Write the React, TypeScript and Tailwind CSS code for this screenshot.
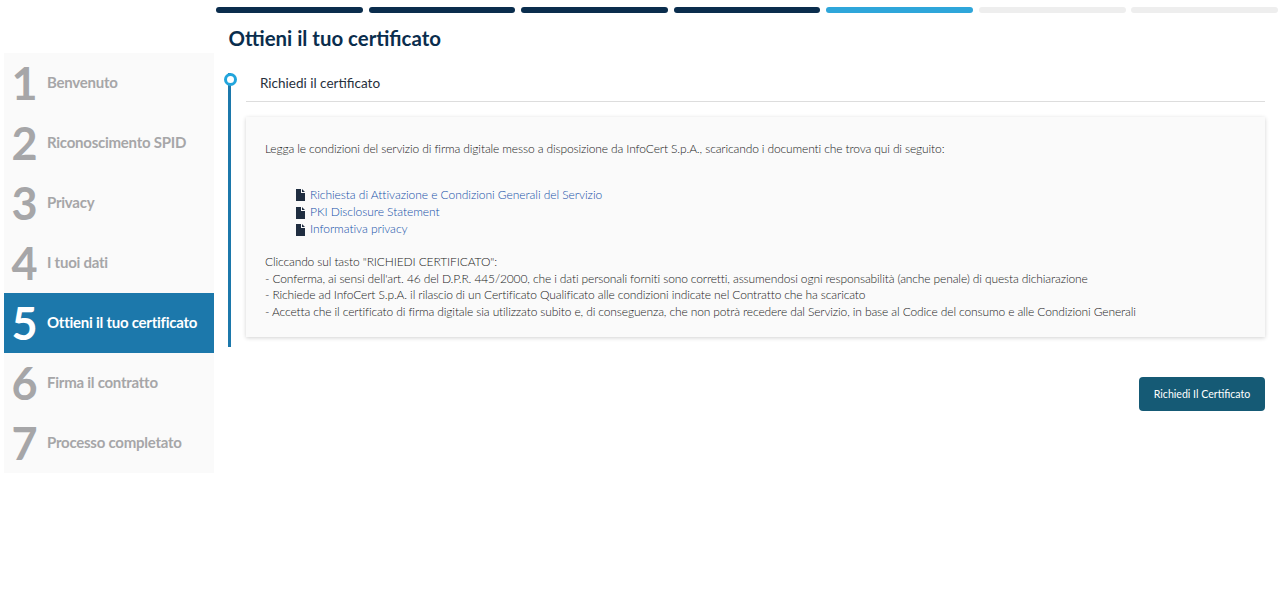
const steps = ["Benvenuto", "Riconoscimento SPID", "Privacy", "I tuoi dati", "Ottieni il tuo certificato", "Firma il contratto", "Processo completato"];
const bars = ["bg-[#0a2d4d]", "bg-[#0a2d4d]", "bg-[#0a2d4d]", "bg-[#0a2d4d]", "bg-[#2fa6da]", "bg-[#eeeeee]", "bg-[#eeeeee]"];
const docs = ["Richiesta di Attivazione e Condizioni Generali del Servizio", "PKI Disclosure Statement", "Informativa privacy"];

function DocIcon() {
  return (
    <svg width="9" height="12" viewBox="0 0 9 12" className="shrink-0">
      <path d="M0 0H5V4H9V12H0Z M6 0L9 3H6Z" fill="#1f2d40" />
    </svg>
  );
}

export default function App() {
  return (
    <div className="w-[1280px] h-[598px] bg-white overflow-hidden font-['Lato',sans-serif] flex items-start">
      <aside className="mt-[53px] ml-1 w-[209.5px] shrink-0 bg-[#fafafa]">
        {steps.map((s, i) => {
          const active = i === 4;
          return (
            <div key={s} className={`h-[60px] flex items-center ${active ? "bg-[#1c78ab] text-white" : "text-[#a6a6a8]"}`}>
              <span className="w-[43px] pr-[2px] text-center text-[45px] leading-none font-bold">{i + 1}</span>
              <span className="text-[15px] mb-[2px] font-bold tracking-[-0.25px] whitespace-nowrap">{s}</span>
            </div>
          );
        })}
      </aside>
      <main className="ml-[2.5px] flex-1 min-w-0">
        <div className="mt-[7px] flex gap-[5.6px] pr-0.5">
          {bars.map((b, i) => (
            <div key={i} className={`h-[6px] flex-1 rounded-full ${b}`} />
          ))}
        </div>
        <h1 className="mt-[13px] ml-[12.5px] text-[20.4px] leading-[24px] font-bold text-[#0a2d4d]">Ottieni il tuo certificato</h1>
        <div className="relative mt-[23px] ml-[12px] h-[274px] border-l-[3px] border-[#1c78ab] pl-[15px] pr-[15px]">
          <span className="absolute left-[-7.5px] top-0 w-[13px] h-[13px] rounded-full border-[3px] border-[#22a5dc] bg-white" />
          <div className="h-[29px] border-b border-[#dddddd] pl-[14px] text-[13.5px] leading-[20px] text-[#26303c]">Richiedi il certificato</div>
          <div className="mt-[15px] h-[220px] bg-[#fafafa] shadow-[0_1px_4px_rgba(0,0,0,0.18)] pl-[19px] pt-[24px] text-[12px] leading-[16.8px] font-light text-[#222222] tracking-[-0.13px]">
            <p>Legga le condizioni del servizio di firma digitale messo a disposizione da InfoCert S.p.A., scaricando i documenti che trova qui di seguito:</p>
            <ul className="mt-[29px] ml-[31px] tracking-[-0.05px]">
              {docs.map((d) => (
                <li key={d} className="h-[17.2px] flex items-center gap-[5px]">
                  <DocIcon />
                  <a className="text-[#134fa8]">{d}</a>
                </li>
              ))}
            </ul>
            <div className="mt-[15.5px]">
              <p>Cliccando sul tasto "RICHIEDI CERTIFICATO":</p>
              <p>- Conferma, ai sensi dell'art. 46 del D.P.R. 445/2000, che i dati personali forniti sono corretti, assumendosi ogni responsabilità (anche penale) di questa dichiarazione</p>
              <p>- Richiede ad InfoCert S.p.A. il rilascio di un Certificato Qualificato alle condizioni indicate nel Contratto che ha scaricato</p>
              <p>- Accetta che il certificato di firma digitale sia utilizzato subito e, di conseguenza, che non potrà recedere dal Servizio, in base al Codice del consumo e alle Condizioni Generali</p>
            </div>
          </div>
        </div>
        <div className="mt-[30px] pr-[15px] flex justify-end">
          <button className="w-[126px] h-[34px] pt-[1px] rounded-[4px] bg-[#155a75] text-white text-[10.6px] font-['Lato',sans-serif]">Richiedi Il Certificato</button>
        </div>
      </main>
    </div>
  );
}
